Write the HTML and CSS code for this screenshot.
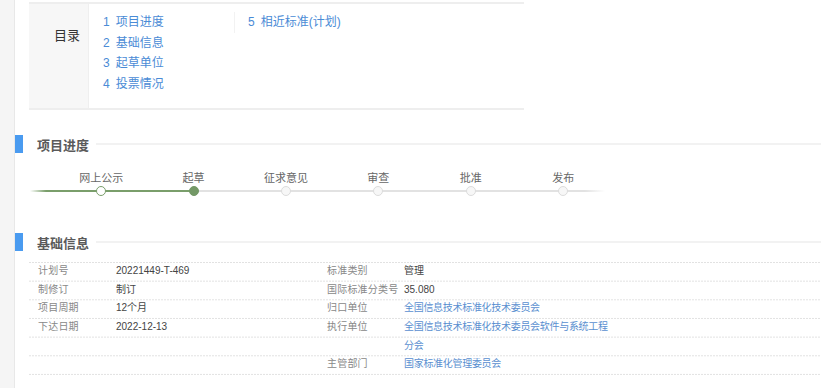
FILE: index.html
```html
<!DOCTYPE html>
<html lang="zh-CN">
<head>
  <meta charset="UTF-8">
  <meta name="viewport" content="width=device-width, initial-scale=1.0">
  <title>计划详情</title>
  <link rel="stylesheet" href="styles.css">
</head>
<body>
  <div class="page">
    <aside class="side"></aside>

    <main class="main">
      <!-- 目录 -->
      <div class="toc">
        <div class="toc-label">目录</div>
        <ul class="toc-col">
          <li><a href="#progress"><span class="num">1</span>项目进度</a></li>
          <li><a href="#basic"><span class="num">2</span>基础信息</a></li>
          <li><a href="#drafters"><span class="num">3</span>起草单位</a></li>
          <li><a href="#votes"><span class="num">4</span>投票情况</a></li>
        </ul>
        <ul class="toc-col toc-col-2">
          <li><a href="#similar"><span class="num">5</span>相近标准(计划)</a></li>
        </ul>
      </div>

      <!-- 项目进度 -->
      <h2 class="sec-title" id="progress">项目进度</h2>
      <div class="steps">
        <div class="step passed"><span class="step-name">网上公示</span><i class="dot"></i></div>
        <div class="step current"><span class="step-name">起草</span><i class="dot"></i></div>
        <div class="step"><span class="step-name">征求意见</span><i class="dot"></i></div>
        <div class="step"><span class="step-name">审查</span><i class="dot"></i></div>
        <div class="step"><span class="step-name">批准</span><i class="dot"></i></div>
        <div class="step"><span class="step-name">发布</span><i class="dot"></i></div>
      </div>

      <!-- 基础信息 -->
      <h2 class="sec-title" id="basic">基础信息</h2>
      <div class="info">
        <span class="label">计划号</span>
        <span class="value">20221449-T-469</span>
        <span class="label">标准类别</span>
        <span class="value">管理</span>

        <span class="label">制修订</span>
        <span class="value">制订</span>
        <span class="label">国际标准分类号</span>
        <span class="value">35.080</span>

        <span class="label">项目周期</span>
        <span class="value">12个月</span>
        <span class="label">归口单位</span>
        <span class="value"><a href="#">全国信息技术标准化技术委员会</a></span>

        <span class="label">下达日期</span>
        <span class="value">2022-12-13</span>
        <span class="label">执行单位</span>
        <span class="value"><a class="wrap" href="#">全国信息技术标准化技术委员会软件与系统工程分会</a></span>

        <span class="label"></span>
        <span class="value"></span>
        <span class="label">主管部门</span>
        <span class="value"><a href="#">国家标准化管理委员会</a></span>
      </div>
    </main>
  </div>
</body>
</html>
```

FILE: styles.css
```css
body {
  margin: 0;
  padding: 0;
  background: #fff;
  color: #333;
  font-family: "Liberation Sans", "Noto Sans CJK SC", sans-serif;
  overflow: hidden;
}

a {
  text-decoration: none;
}

.page {
  display: flex;
  min-height: 388px;
}

.side {
  width: 14px;
  flex: 0 0 14px;
  background-color: #f5f5f5;
  border-right: 1px solid #e8e8e8;
}

.main {
  flex: 1;
  padding-right: 10px;
}

/* 目录 */
.toc {
  display: flex;
  align-items: flex-start;
  width: 495px;
  height: 104px;
  margin: 2px 0 0 14px;
  border-top: 2px solid #eeeeee;
  border-bottom: 2px solid #eeeeee;
}

.toc-label {
  width: 60px;
  height: 100%;
  box-sizing: border-box;
  padding: 22px 0 0 25px;
  background-color: #f7f7f7;
  border-right: 1px solid #efefef;
  font-size: 13px;
  line-height: 20px;
  color: #333;
}

.toc-col {
  list-style: none;
  margin: 8px 0 0;
  padding: 0 0 0 14px;
  width: 131px;
  font-size: 12px;
  line-height: 20.67px;
}

.toc-col-2 {
  width: auto;
  padding-left: 13px;
  border-left: 1px solid #f2f2f2;
}

.toc-col a {
  color: #4a8bd6;
}

.toc-col .num {
  margin-right: 6px;
}

/* 区块标题 */
.sec-title {
  display: flex;
  align-items: center;
  height: 18px;
  margin: 25px 0 0;
  font-size: 13px;
  font-weight: bold;
  color: #5a5a5a;
}

.sec-title::before {
  content: "";
  width: 8px;
  height: 18px;
  margin-right: 14px;
  background-color: #4a9bf0;
}

.sec-title::after {
  content: "";
  flex: 1;
  height: 2px;
  margin-left: 7px;
  background-color: #f2f2f2;
}

/* 项目进度 */
.steps {
  position: relative;
  display: flex;
  width: 575px;
  margin: 18px 0 0 15px;
  padding-left: 25px;
  box-sizing: border-box;
}

.steps::before {
  content: "";
  position: absolute;
  left: 0;
  top: 19px;
  width: 575px;
  height: 2px;
  background: linear-gradient(to right,
    rgba(122, 158, 107, 0) 0,
    #7a9e6b 16px,
    #7a9e6b 163px,
    #e2e2e2 163px,
    #e2e2e2 555px,
    rgba(226, 226, 226, 0) 575px);
}

.step {
  position: relative;
  flex: 0 0 92.4px;
  display: flex;
  flex-direction: column;
  align-items: center;
}

.step-name {
  font-size: 11px;
  line-height: 14px;
  color: #666;
  white-space: nowrap;
}

.dot {
  display: block;
  width: 10px;
  height: 10px;
  margin-top: 1px;
  box-sizing: border-box;
  border-radius: 50%;
  border: 1.5px solid #dcdcdc;
  background-color: #f7f7f7;
}

.step.passed .dot {
  border-color: #7a9e6b;
  background-color: #fff;
}

.step.current .dot {
  border-color: #739866;
  background-color: #739866;
}

/* 基础信息 */
#basic {
  margin-top: 37px;
}

.info {
  display: grid;
  grid-template-columns: 78px 211px 77px 1fr;
  margin: 11px 0 0 14px;
  padding-bottom: 1px;
  font-size: 10px;
  line-height: 18.67px;
  background:
    linear-gradient(to right, transparent 2px, #fff 2px) 0 0 / 3px 100%,
    linear-gradient(#e2e2e2 1px, transparent 1px) 0 0 / 100% 18.67px;
}

.info .label,
.info .value {
  padding-left: 9px;
  white-space: nowrap;
}

.info .label {
  color: #888;
  letter-spacing: 0.2px;
}

.info .value {
  color: #444;
}

.info a {
  color: #5a8fd0;
  letter-spacing: -0.3px;
}

.info a.wrap {
  display: inline-block;
  max-width: 212px;
  white-space: normal;
}
```
